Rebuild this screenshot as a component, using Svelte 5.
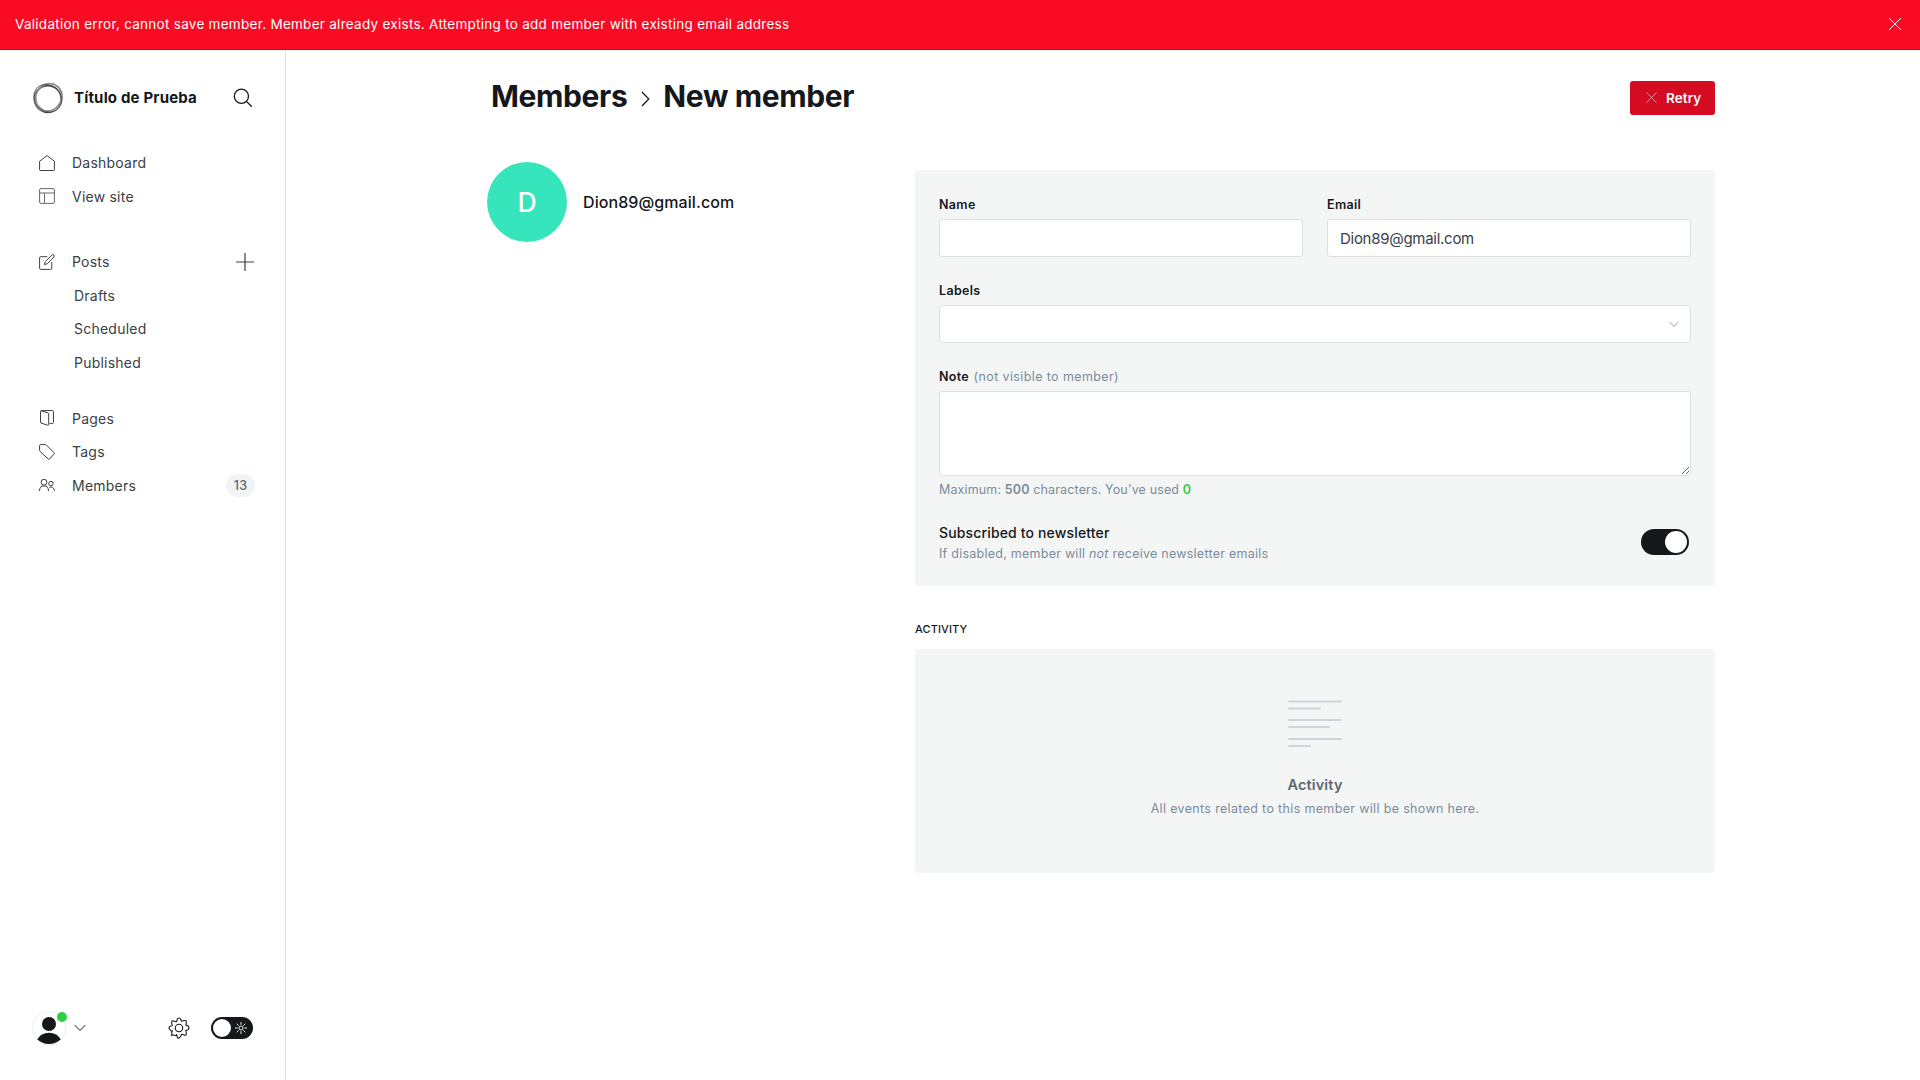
<script>
  let name = $state('');
  let email = $state('Dion89@gmail.com');
  let labels = $state('');
  let note = $state('');

  const postViews = ['Drafts', 'Scheduled', 'Published'];
  const activityLines = [
    [2.5, 54],
    [9.5, 33],
    [21, 54],
    [28, 42],
    [40, 54],
    [47, 23]
  ];
</script>

<div class="app">
  <div class="alert">
    <span>Validation error, cannot save member. Member already exists. Attempting to add member with existing email address</span>
    <svg class="close" width="14" height="14" viewBox="0 0 14 14"><path d="M1 1l12 12M13 1L1 13" /></svg>
  </div>

  <div class="body">
    <nav class="sidebar">
      <header class="site">
        <svg class="logo" width="32" height="32" viewBox="0 0 32 32">
          <circle cx="15.8" cy="17" r="13.4" stroke="#444" stroke-width="1.6" />
          <ellipse cx="17.2" cy="15.4" rx="13.2" ry="14" stroke="#aaa" stroke-width="1.4" />
          <ellipse cx="16.6" cy="16" rx="14.4" ry="12.6" stroke="#888" stroke-width="1.5" transform="rotate(-50 16 16)" />
          <ellipse cx="16" cy="16.4" rx="14.8" ry="12.9" stroke="#555" stroke-width=".9" transform="rotate(42 16 16)" />
        </svg>
        <span class="title">Título de Prueba</span>
        <svg class="search" width="20" height="20" viewBox="0 0 20 20"><circle cx="8.4" cy="8.2" r="7.1" /><path d="M13.5 13.4l5.3 5.3" /></svg>
      </header>

      <ul class="group">
        <li>
          <svg class="icon" viewBox="0 0 16 16"><path d="M.6 6.2L8 .6l7.4 5.6v8.6q0 .7-.7.7H1.3q-.7 0-.7-.7z" /></svg>
          <span>Dashboard</span>
        </li>
        <li>
          <svg class="icon view" viewBox="0 0 16 16"><rect x=".6" y=".6" width="14.8" height="14.8" rx="1.4" /><path d="M.6 5h14.8M5.5 5v10.4" /></svg>
          <span>View site</span>
        </li>
      </ul>

      <ul class="group posts">
        <li>
          <svg class="icon" viewBox="0 0 16 16"><path d="M8.3 2.7H1.8Q.6 2.7.6 3.9v10.3q0 1.2 1.2 1.2h9.8q1.2 0 1.2-1.2V8M5.4 10.6l.8-2.9L12.9 1a1.4 1.4 0 0 1 2 2L8.3 9.7z" /></svg>
          <span>Posts</span>
          <svg class="plus" width="18" height="18" viewBox="0 0 18 18"><path d="M9 0v18M0 9h18" /></svg>
        </li>
        {#each postViews as view}
          <li class="sub"><span>{view}</span></li>
        {/each}
      </ul>

      <ul class="group pages">
        <li>
          <svg class="icon raised" viewBox="0 0 16 16"><path d="M3.2 13.3l-1-.3q-.7-.2-.7-.9V1.5q0-.9.9-.9h11.2q.9 0 .9.9v11q0 .9-.9.9h-3M2 .8l6.8 2q.9.3.9 1.1v10.6q0 1-.9.8l-6.6-2.2" /></svg>
          <span>Pages</span>
        </li>
        <li>
          <svg class="icon" viewBox="0 0 16 16"><path d="M.6 1.5Q.6.6 1.5.6h5q.5 0 .8.3l7.800 7.800q.6.6 0 1.200l-4.600 5.200q-.6.6-1.200 0L.9 7.300Q.6 7 .6 6.500z" /></svg>
          <span>Tags</span>
        </li>
        <li>
          <svg class="icon" viewBox="0 0 16 16"><circle cx="5" cy="5.2" r="2.9" /><path d="M.5 14q0-5.1 4.5-5.1T9.500 14" /><circle cx="11.9" cy="6.6" r="2.2" /><path d="M10.3 10.500q1.500-1 3.100-.2 1.900.9 2.100 3.500" /></svg>
          <span>Members</span>
          <span class="badge">13</span>
        </li>
      </ul>

      <footer>
        <div class="user">
          <svg width="34" height="34" viewBox="0 0 34 34">
            <circle cx="17" cy="17" r="16.5" fill="#fff" stroke="#eceff1" />
            <circle cx="17" cy="13" r="7" fill="#15171a" />
            <path d="M5.200 28.200Q9 21.700 17 21.700t11.800 6.500Q24 33 17 33T5.200 28.200z" fill="#15171a" />
          </svg>
          <i class="online"></i>
        </div>
        <svg class="chevron" width="12" height="8" viewBox="0 0 12 8"><path d="M.7 1L6 6.500 11.300 1" /></svg>
        <svg class="gear" width="22" height="22" viewBox="0 0 22 22">
          <circle cx="11" cy="11" r="3.700" />
          <path d="M9.100 2.600q.4-1.600 1.900-1.600t1.900 1.600.5 1.500 2-.4 2.500-.2.300 2.500-.4 2 1.500.5 1.600 1.900v1.200q0 1-1.600 1.400t-1.500.5.400 2-.3 2.500-2.500-.2-2-.4-.5 1.500T11 21t-1.900-1.600-.5-1.500-2 .4-2.500.2-.3-2.500.4-2-1.500-.5-1.600-1.900v-1.200q0-1 1.600-1.400t1.500-.5-.4-2 .3-2.500 2.500.2 2 .4.500-1.500z" />
        </svg>
        <div class="night">
          <i></i>
          <svg width="12" height="12" viewBox="0 0 12 12"><circle cx="6" cy="6" r="2" /><path d="M6 0v2.800M6 9.200V12M0 6h2.800M9.200 6H12M1.700 1.700l2 2M8.300 8.300l2 2M1.700 10.300l2-2M8.300 3.700l2-2" /></svg>
        </div>
      </footer>
    </nav>

    <main>
      <header class="top">
        <h1>
          <span>Members</span>
          <svg width="9" height="16" viewBox="0 0 9 16"><path d="M1 1l6.800 7L1 15" /></svg>
          <span>New member</span>
        </h1>
        <button class="retry">
          <svg width="11" height="11" viewBox="0 0 11 11"><path d="M.5.5l10 10M10.500.5l-10 10" /></svg>
          Retry
        </button>
      </header>

      <div class="columns">
        <section class="member">
          <div class="avatar">D</div>
          <strong>{email}</strong>
        </section>

        <div class="details">
          <form class="card">
            <div class="pair">
              <label><b>Name</b><input type="text" bind:value={name} /></label>
              <label><b>Email</b><input type="text" bind:value={email} /></label>
            </div>
            <label>
              <b>Labels</b>
              <span class="select">
                <input type="text" bind:value={labels} />
                <svg width="10" height="7" viewBox="0 0 10 7"><path d="M.5.800L5 5.500 9.500.800" /></svg>
              </span>
            </label>
            <label class="note">
              <b>Note <em>(not visible to member)</em></b>
              <textarea bind:value={note}></textarea>
            </label>
            <p class="help limit">Maximum: <b>500</b> characters. You’ve used <b class="count">{note.length}</b></p>
            <div class="newsletter">
              <div>
                <h4>Subscribed to newsletter</h4>
                <p class="help">If disabled, member will <i>not</i> receive newsletter emails</p>
              </div>
              <span class="toggle"></span>
            </div>
          </form>

          <h5>ACTIVITY</h5>
          <section class="card empty">
            <svg width="54" height="50" viewBox="0 0 54 50">
              {#each activityLines as [y, w]}
                <path d="M1 {y}H{w - 1}" />
              {/each}
            </svg>
            <h3>Activity</h3>
            <p>All events related to this member will be shown here.</p>
          </section>
        </div>
      </div>
    </main>
  </div>
</div>

<style>
  :global(body) { background: #fff; overflow: hidden; }
  .app, .app * { box-sizing: border-box; }
  .app {
    display: flex;
    flex-direction: column;
    height: 1080px;
    font-family: Inter, 'Liberation Sans', sans-serif;
    color: #15171a;
  }
  svg { fill: none; flex: none; display: block; }
  ul, h1, h3, h4, h5, p { margin: 0; padding: 0; }

  .alert {
    display: flex;
    align-items: center;
    justify-content: space-between;
    height: 50px;
    padding: 0 18px 2px 15px;
    background: #f80b23;
    border-bottom: 1px solid #bd0a1d;
    color: #fff;
    font-size: 13.5px;
    letter-spacing: .275px;
  }
  .close { stroke: #fff; stroke-width: 1; }

  .body { display: flex; flex: 1; min-height: 0; }
  .sidebar {
    display: flex;
    flex-direction: column;
    width: 286px;
    border-right: 1px solid #e1e4e6;
    padding: 32px 30px 0 32px;
  }
  .site { display: flex; align-items: center; height: 32px; }
  .title { margin-left: 10px; padding-bottom: 2px; font-size: 15px; font-weight: 700; letter-spacing: .18px; }
  .search { margin-left: auto; margin-right: 2px; stroke: #15171a; stroke-width: 1.3; }

  .group { list-style: none; padding-left: 7px; margin-top: 32px; }
  .posts, .pages { margin-top: 0; }
  .posts { padding-top: 32px; }
  .pages { padding-top: 22.5px; }
  .group li {
    display: flex;
    align-items: center;
    height: 33.5px;
    color: #394047;
    font-size: 14px;
    letter-spacing: .23px;
  }
  .icon { width: 16px; height: 16px; margin-right: 17px; stroke: #394047; stroke-width: 1; }
  .view { stroke: #626a70; }
  .raised { margin-top: -1px; }
  .group .sub { padding-left: 35px; }
  .plus { margin-left: auto; margin-right: 1px; stroke: #394047; stroke-width: 1.2; }
  .badge {
    display: flex;
    align-items: center;
    justify-content: center;
    width: 29px;
    height: 23px;
    margin-left: auto;
    border-radius: 12px;
    background: #f1f4f5;
    font-size: 12.5px;
    font-weight: 500;
    color: #5d666f;
  }

  footer { display: flex; align-items: center; height: 34px; margin-top: auto; margin-bottom: 35px; }
  .user { position: relative; }
  .online {
    position: absolute;
    top: 1px;
    right: -1px;
    width: 10px;
    height: 10px;
    border-radius: 50%;
    background: #30cf43;
  }
  .chevron { margin-left: 8px; stroke: #15171a; stroke-width: 1; }
  .gear { margin-left: auto; margin-right: 21px; stroke: #15171a; stroke-width: 1.1; }
  .night {
    display: flex;
    align-items: center;
    justify-content: space-between;
    width: 42px;
    height: 22px;
    margin-right: 2px;
    padding: 0 6px 0 2px;
    border-radius: 11px;
    background: #15171a;
  }
  .night i { width: 18px; height: 18px; border-radius: 50%; background: #fff; }
  .night svg { stroke: #fff; stroke-width: .9; }

  main { flex: 1; padding: 31px 205px 0; }
  .top { display: flex; align-items: center; justify-content: space-between; height: 34px; }
  h1 { display: flex; align-items: center; font-size: 30px; line-height: 34px; font-weight: 700; letter-spacing: -.38px; }
  h1 span { padding-bottom: 4px; }
  h1 svg { margin: 1px 13px 0 14px; stroke: #15171a; stroke-width: 1.2; }
  .retry {
    display: flex;
    align-items: center;
    width: 85px;
    height: 34px;
    padding: 0 0 0 16px;
    gap: 9px;
    border: 0;
    border-radius: 3px;
    background: #d50b21;
    color: #fff;
    font: 600 13.5px Inter, sans-serif;
    letter-spacing: .1px;
  }
  .retry svg { stroke: #ff8c98; stroke-width: 1; margin-top: -1px; }

  .columns { display: flex; justify-content: space-between; }
  .member { display: flex; align-items: center; height: 80px; margin: 47px 0 0 -4px; }
  .avatar {
    display: flex;
    align-items: center;
    justify-content: center;
    width: 80px;
    height: 80px;
    margin-right: 16px;
    border-radius: 50%;
    background: #37e5bd;
    color: #fff;
    font-size: 26.5px;
    font-weight: 500;
  }
  .member strong { font-size: 16px; font-weight: 500; letter-spacing: .08px; }

  .details { width: 800px; margin-top: 55px; }
  .card { background: #f4f6f6; border-radius: 4px; }
  form { height: 416px; padding: 24px 24px 0; }
  label { display: block; height: 86px; }
  label > b { display: block; height: 25px; line-height: 22px; font-size: 12.5px; font-weight: 600; letter-spacing: .32px; }
  em { margin-left: 1px; font-style: normal; font-weight: 400; letter-spacing: .385px; color: #7c8b9a; }
  .pair { display: grid; grid-template-columns: 1fr 1fr; gap: 24px; }
  input, textarea {
    display: block;
    width: 100%;
    height: 38px;
    padding: 0 12px;
    border: 1px solid #dce0e2;
    border-radius: 3px;
    background: #fff;
    outline: 0;
    color: #394047;
    font: 400 15px Inter, sans-serif;
    letter-spacing: -.28px;
  }
  textarea { height: 85px; resize: vertical; }
  .select { display: block; position: relative; }
  .select svg { position: absolute; right: 12px; top: 16px; stroke: #9aa5ad; }
  .note { height: 110px; }
  .help { font-size: 12.5px; line-height: 20px; letter-spacing: .25px; color: #7c8b9a; }
  .limit { padding-top: 4px; letter-spacing: .14px; }
  .help b { font-weight: 600; }
  .help .count { color: #30cf43; }
  .newsletter { display: flex; justify-content: space-between; align-items: flex-start; margin-top: 23px; height: 44px; padding-right: 2px; }
  h4 { font-size: 14px; line-height: 20px; font-weight: 500; letter-spacing: .15px; }
  h4 + .help { margin-top: 1px; }
  .toggle { display: flex; justify-content: flex-end; width: 48px; height: 26px; margin-top: 6px; padding: 2px; border-radius: 13px; background: #15171a; }
  .toggle::after { content: ''; width: 22px; height: 22px; border-radius: 50%; background: #fff; }

  h5 { margin: 34px 0 10px; font-size: 11px; line-height: 19px; font-weight: 500; letter-spacing: .1px; }
  .empty { display: flex; flex-direction: column; align-items: center; height: 224px; padding-top: 50px; }
  .empty svg { stroke: #ced4d9; stroke-width: 2; stroke-linecap: round; }
  .empty h3 { margin-top: 26px; font-size: 14.5px; line-height: 20px; font-weight: 600; letter-spacing: .15px; color: #5d6670; }
  .empty p { margin-top: 4px; font-size: 12.5px; line-height: 20px; letter-spacing: .34px; color: #7c8b9a; }
</style>
